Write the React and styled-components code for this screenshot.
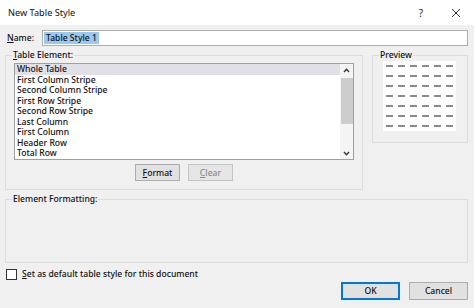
import React from 'react'
import styled, { createGlobalStyle } from 'styled-components'

const GlobalStyle = createGlobalStyle`
  html, body {
    margin: 0;
    padding: 0;
  }

  body {
    font-family: "Noto Sans", "Open Sans", sans-serif;
    font-size: 8.6px;
    font-weight: 500;
    color: #111;
    background-color: #f0f0f0;
  }
`

const Dialog = styled.div`
  width: 474px;
  height: 308px;
  display: flex;
  flex-direction: column;
  overflow: hidden;
  background-color: #f0f0f0;
`

const TitleBar = styled.div`
  height: 25px;
  display: flex;
  align-items: center;
  padding-left: 8px;
  background-color: #fff;
  font-size: 9.2px;
  font-weight: 400;

  .title {
    flex: 1;
  }
`

const TitleButton = styled.span`
  width: ${(p) => p.$w}px;
  display: flex;
  justify-content: center;
  align-items: center;
  font-size: 10px;
  color: #222;
`

const Body = styled.div`
  flex: 1;
  display: flex;
  flex-direction: column;
  padding: 4px 6px 0 5px;
`

const NameRow = styled.div`
  height: 16px;
  display: flex;
  align-items: center;
  margin-top: 1px;

  label {
    width: 35px;
    padding-left: 2px;
  }
`

const NameInput = styled.div`
  flex: 1;
  height: 16px;
  box-sizing: border-box;
  display: flex;
  align-items: center;
  padding-left: 1px;
  border: 1px solid #adadad;
  background-color: #fff;

  .selected {
    padding: 0 2px;
    line-height: 12px;
    background-color: #99c9ef;
  }
`

const GroupRow = styled.div`
  display: flex;
  align-items: flex-start;
  gap: 9px;
  margin-top: ${(p) => p.$top}px;
`

const Group = styled.fieldset`
  margin: 0;
  padding: ${(p) => p.$pad};
  width: ${(p) => (p.$w ? `${p.$w}px` : 'auto')};
  height: ${(p) => p.$h}px;
  box-sizing: border-box;
  flex: ${(p) => (p.$w ? 'none' : '1')};
  min-width: 0;
  border: 1px solid #dcdcdc;

  legend {
    margin-left: ${(p) => p.$legendShift || 0}px;
    padding: 0 1px;
    line-height: 12px;
  }
`

const ListBox = styled.div`
  height: 97px;
  box-sizing: border-box;
  display: flex;
  margin-top: 2px;
  border: 1px solid #a0a0a0;
  background-color: #fff;
`

const Items = styled.ul`
  flex: 1;
  margin: 0;
  padding: 0;
  list-style: none;
`

const Item = styled.li`
  height: 10.5px;
  line-height: 10.5px;
  padding-left: 2px;
  white-space: nowrap;
  background-color: ${(p) => (p.$selected ? '#e0e0e6' : 'transparent')};
`

const ScrollBar = styled.div`
  width: 13px;
  display: flex;
  flex-direction: column;
  align-items: center;
  background-color: #f4f4f4;

  .arrow {
    height: 12px;
    display: flex;
    align-items: center;
    justify-content: center;
  }

  .thumb {
    width: 12px;
    height: 46px;
    margin-top: 2px;
    background-color: #cdcdcd;
  }

  .track {
    flex: 1;
  }
`

const ButtonRow = styled.div`
  display: flex;
  justify-content: ${(p) => p.$align || 'center'};
  gap: ${(p) => p.$gap}px;
  margin-top: ${(p) => p.$top}px;
`

const Button = styled.button`
  width: ${(p) => p.$w}px;
  height: ${(p) => p.$h}px;
  box-sizing: border-box;
  padding: 0;
  font-family: inherit;
  font-size: 8.6px;
  font-weight: 500;
  color: ${(p) => (p.disabled ? '#8a8a8a' : '#111')};
  background-color: ${(p) => (p.disabled ? '#e6e6e6' : '#e1e1e1')};
  border: ${(p) =>
    p.$default ? '2px solid #0078d7' : `1px solid ${p.disabled ? '#c4c4c4' : '#adadad'}`};
`

const PreviewBox = styled.div`
  width: 73px;
  height: 70px;
  display: grid;
  grid-template-columns: repeat(6, 12px);
  grid-template-rows: repeat(7, 10px);
  align-items: center;
  justify-items: center;
  margin-left: 1px;
  background-color: #fff;
`

const Dash = styled.span`
  width: 7px;
  height: 2px;
  background-color: #8a8a8a;
`

const CheckRow = styled.label`
  display: flex;
  align-items: center;
  gap: 5px;
  margin-top: 5px;
  padding-left: 1px;

  .box {
    width: 11px;
    height: 11px;
    box-sizing: border-box;
    border: 1px solid #333;
    background-color: #fff;
  }
`

const items = [
  'Whole Table',
  'First Column Stripe',
  'Second Column Stripe',
  'First Row Stripe',
  'Second Row Stripe',
  'Last Column',
  'First Column',
  'Header Row',
  'Total Row',
]

const Chevron = ({ up }) => (
  <svg width="7" height="5" viewBox="0 0 7 5">
    <path
      d={up ? 'M1 4 L3.5 1.2 L6 4' : 'M1 1 L3.5 3.8 L6 1'}
      fill="none"
      stroke="#333"
      strokeWidth="1.3"
    />
  </svg>
)

const App = () => (
  <Dialog>
    <GlobalStyle />
    <TitleBar>
      <span className="title">New Table Style</span>
      <TitleButton $w={34}>?</TitleButton>
      <TitleButton $w={36}>
        <svg width="10" height="10" viewBox="0 0 10 10">
          <path d="M1 1 L9 9 M9 1 L1 9" stroke="#333" strokeWidth="1" />
        </svg>
      </TitleButton>
    </TitleBar>

    <Body>
      <NameRow>
        <label>
          <u>N</u>ame:
        </label>
        <NameInput>
          <span className="selected">Table Style 1</span>
        </NameInput>
      </NameRow>

      <GroupRow $top={3}>
        <Group $pad="0 8px" $h={141} $legendShift={-2}>
          <legend>
            <u>T</u>able Element:
          </legend>
          <ListBox>
            <Items>
              {items.map((item, i) => (
                <Item key={item} $selected={i === 0}>
                  {item}
                </Item>
              ))}
            </Items>
            <ScrollBar>
              <span className="arrow">
                <Chevron up />
              </span>
              <span className="thumb" />
              <span className="track" />
              <span className="arrow">
                <Chevron />
              </span>
            </ScrollBar>
          </ListBox>
          <ButtonRow $gap={8} $top={4}>
            <Button $w={45} $h={17}>
              <u>F</u>ormat
            </Button>
            <Button $w={45} $h={17} disabled>
              <u>C</u>lear
            </Button>
          </ButtonRow>
        </Group>

        <Group $w={96} $h={94} $pad="0 8px 0 9px" $legendShift={-3}>
          <legend>Preview</legend>
          <PreviewBox>
            {Array.from({ length: 42 }, (_, i) => (
              <Dash key={i} />
            ))}
          </PreviewBox>
        </Group>
      </GroupRow>

      <GroupRow $top={3}>
        <Group $pad="0 8px" $h={70} $legendShift={-2}>
          <legend>Element Formatting:</legend>
        </Group>
      </GroupRow>

      <CheckRow>
        <span className="box" />
        <span>
          <u>S</u>et as default table style for this document
        </span>
      </CheckRow>

      <ButtonRow $align="flex-end" $gap={9} $top={2}>
        <Button $w={59} $h={18} $default>
          OK
        </Button>
        <Button $w={59} $h={18}>
          Cancel
        </Button>
      </ButtonRow>
    </Body>
  </Dialog>
)

export default App
